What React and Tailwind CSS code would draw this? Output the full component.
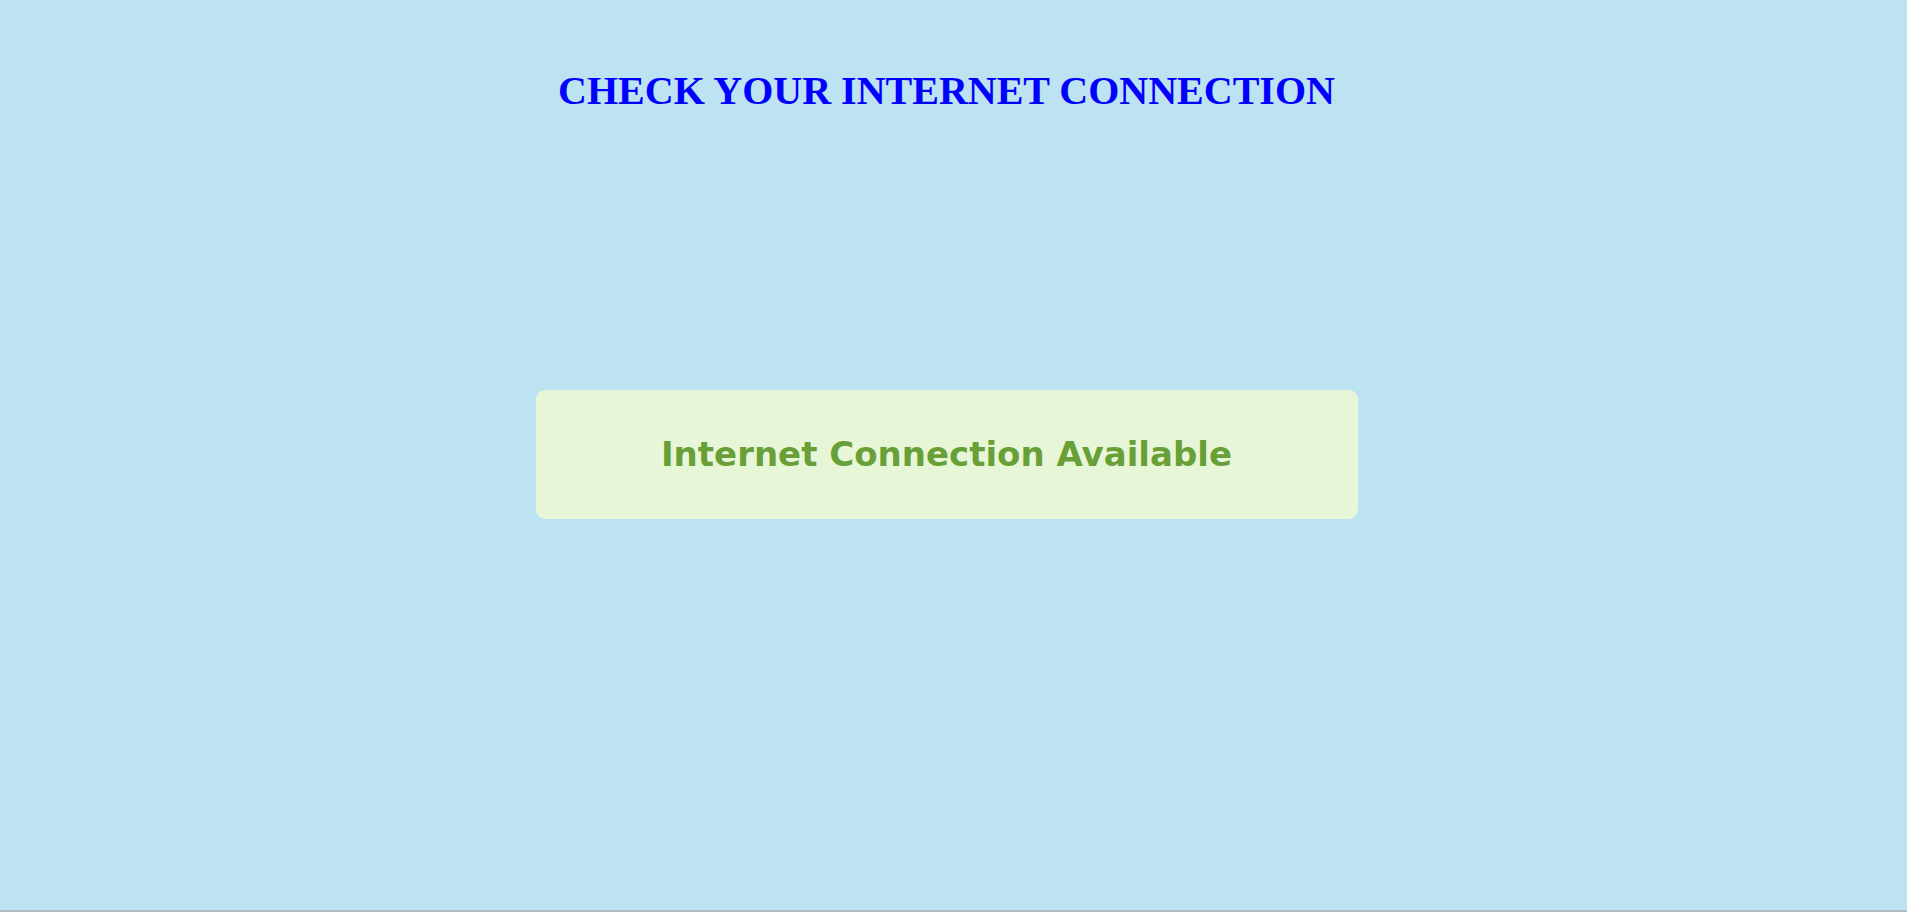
import React from 'react';

const App = () => {
  return (
    <div className="h-[912px] w-full bg-[#bde2f1] flex flex-col">
      <div className="flex-1 flex flex-col items-center pr-[14px]">
        <h1
          className="mt-[71px] text-[40px] leading-none font-bold text-[#0000ff]"
          style={{ fontFamily: '"Liberation Serif", "Times New Roman", serif' }}
        >
          CHECK YOUR INTERNET CONNECTION
        </h1>

        <div className="mt-[279px] w-[822px] h-[129px] rounded-[9px] bg-[#e7f6d6] flex items-center justify-center">
          <p
            className="text-[34px] font-bold text-[#68a037]"
            style={{ fontFamily: '"DejaVu Sans", "Noto Sans", sans-serif' }}
          >
            Internet Connection Available
          </p>
        </div>
      </div>
      <div className="h-[2px] bg-[#b3bcc3]" />
    </div>
  );
};

export default App;
